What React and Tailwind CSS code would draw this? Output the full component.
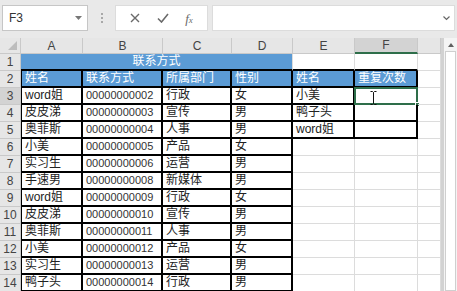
import React from "react";

const FONT = "font-['Liberation_Sans','Noto_Sans_CJK_SC',sans-serif]";

const W = {
  A: "w-[62px]",
  B: "w-[80px]",
  C: "w-[69px]",
  D: "w-[61px]",
  E: "w-[62px]",
  F: "w-[63px]",
  G: "w-[23px]",
};

const rows = [
  ["word姐", "00000000002", "行政", "女", "小美"],
  ["皮皮涕", "00000000003", "宣传", "男", "鸭子头"],
  ["奥菲斯", "00000000004", "人事", "男", "word姐"],
  ["小美", "00000000005", "产品", "女"],
  ["实习生", "00000000006", "运营", "男"],
  ["手速男", "00000000008", "新媒体", "男"],
  ["word姐", "00000000009", "行政", "女"],
  ["皮皮涕", "00000000010", "宣传", "男"],
  ["奥菲斯", "00000000011", "人事", "男"],
  ["小美", "00000000012", "产品", "女"],
  ["实习生", "00000000013", "运营", "男"],
  ["鸭子头", "00000000014", "行政", "男"],
];

const grid = "border-r border-b border-[#dcdcdc]";
const black = "border-r-2 border-b-2 border-black";

const Cell = ({ w, line = grid, extra = "", children }) => (
  <div className={`${w} h-full shrink-0 ${line} ${extra} relative flex items-end px-[3px] pb-[1px] leading-[14px] whitespace-nowrap overflow-hidden`}>
    {children}
  </div>
);

const RowHead = ({ n, active }) => (
  <div className={`w-[21px] h-full shrink-0 flex items-center justify-center border-r border-b border-[#c9c9c9] text-[12px] text-[#444] ${active ? "bg-[#d3d3d3]" : "bg-[#e6e6e6]"}`}>
    {n}
  </div>
);

const ColHead = ({ w, label, active }) => (
  <div className={`${w} h-full shrink-0 flex items-center justify-center border-r text-[12px] text-[#444] ${active ? "bg-[#d3d3d3] border-b-2 border-b-[#2e6e4a] border-r-[#c9c9c9]" : "border-b border-[#c9c9c9]"}`}>
    {label}
  </div>
);

const IBeam = () => (
  <svg width="7" height="14" viewBox="0 0 7 14" className="absolute left-[15px] top-[3px]">
    <path d="M0.5 0.5h2l1 1 1-1h2M3.5 1.5v11M0.5 13.5h2l1-1 1 1h2" fill="none" stroke="#111" strokeWidth="1" />
  </svg>
);

export default function App() {
  return (
    <div className={`w-[457px] h-[291px] overflow-hidden bg-[#e9e9e9] ${FONT} text-[12px] text-[#222]`}>
      {/* formula bar */}
      <div className="h-[38px] flex items-start pt-[5px] pl-[2px]">
        <div className="w-[86px] h-[26px] bg-white border border-[#c6c6c6] flex items-center justify-between pl-[6px] pr-[5px] text-[12px] text-[#333]">
          <span>F3</span>
          <svg width="7" height="4" viewBox="0 0 7 4"><path d="M0 0h7L3.5 4z" fill="#777" /></svg>
        </div>
        <div className="w-[27px] h-[26px] flex flex-col items-center justify-center gap-[2px]">
          <span className="w-[2px] h-[2px] bg-[#a8a8a8]" />
          <span className="w-[2px] h-[2px] bg-[#a8a8a8]" />
          <span className="w-[2px] h-[2px] bg-[#a8a8a8]" />
        </div>
        <div className="w-[93px] h-[26px] bg-white border border-[#dcdcdc] flex items-center justify-around px-[6px] text-[#6a6a6a]">
          <svg width="10" height="10" viewBox="0 0 10 10"><path d="M1 1l8 8M9 1l-8 8" stroke="#6a6a6a" strokeWidth="1.4" /></svg>
          <svg width="12" height="10" viewBox="0 0 12 10"><path d="M1 5.5l3.5 3.5L11 1" fill="none" stroke="#6a6a6a" strokeWidth="1.6" /></svg>
          <span className="font-['Liberation_Serif',serif] italic text-[13px] leading-none">f<span className="text-[9px]">x</span></span>
        </div>
        <div className="ml-[4px] w-[243px] h-[26px] bg-white border border-[#dcdcdc] flex items-center justify-end pr-[4px]">
          <svg width="7" height="5" viewBox="0 0 7 5"><path d="M0.5 0.5l3 3 3-3" fill="none" stroke="#666" strokeWidth="1.2" /></svg>
        </div>
      </div>

      <div className="flex">
        {/* sheet */}
        <div className="w-[441px] bg-white">
          <div className="h-[16px] flex bg-[#e6e6e6]">
            <div className="w-[21px] h-full shrink-0 border-r border-b border-[#c9c9c9] flex items-end justify-end pr-[3px] pb-[3px]">
              <svg width="9" height="9" viewBox="0 0 9 9"><path d="M9 0v9H0z" fill="#bdbdbd" /></svg>
            </div>
            <ColHead w={W.A} label="A" />
            <ColHead w={W.B} label="B" />
            <ColHead w={W.C} label="C" />
            <ColHead w={W.D} label="D" />
            <ColHead w={W.E} label="E" />
            <ColHead w={W.F} label="F" active />
            <ColHead w={W.G} label="" />
          </div>

          <div className="h-[17px] flex">
            <RowHead n={1} />
            <Cell w="w-[272px]" line="border-b-2 border-b-black border-r border-r-[#dcdcdc]" extra="bg-[#5b9bd5] text-white justify-center">
              联系方式
            </Cell>
            <Cell w={W.E} line="border-r border-r-[#dcdcdc] border-b-2 border-b-black" />
            <Cell w={W.F} line="border-r border-r-[#dcdcdc] border-b-2 border-b-black" />
            <Cell w={W.G} />
          </div>

          <div className="h-[17px] flex">
            <RowHead n={2} />
            <Cell w={W.A} line={black} extra="border-l bg-[#5b9bd5] text-white">姓名</Cell>
            <Cell w={W.B} line={black} extra="bg-[#5b9bd5] text-white">联系方式</Cell>
            <Cell w={W.C} line={black} extra="bg-[#5b9bd5] text-white">所属部门</Cell>
            <Cell w={W.D} line={black} extra="bg-[#5b9bd5] text-white">性别</Cell>
            <Cell w={W.E} line={black} extra="bg-[#5b9bd5] text-white">姓名</Cell>
            <Cell w={W.F} line={black} extra="bg-[#5b9bd5] text-white">重复次数</Cell>
            <Cell w={W.G} />
          </div>

          {rows.map((r, i) => {
            const n = i + 3;
            const inRight = n <= 5;
            return (
              <div key={n} className="h-[17px] flex">
                <RowHead n={n} active={n === 3} />
                <Cell w={W.A} line={black} extra="border-l">{r[0]}</Cell>
                <Cell w={W.B} line={black} extra="text-[11px] text-[#333]">{r[1]}</Cell>
                <Cell w={W.C} line={black}>{r[2]}</Cell>
                <Cell w={W.D} line={black}>{r[3]}</Cell>
                <Cell w={W.E} line={inRight ? black : grid}>{r[4]}</Cell>
                <Cell w={W.F} line={inRight ? black : grid} extra={n === 3 ? "overflow-visible" : ""}>
                  {n === 3 && (
                    <>
                      <div className="absolute -left-px -top-px -right-[2px] -bottom-[2px] border-2 border-[#2e6e4a]" />
                      <div className="absolute -right-[4px] -bottom-[4px] w-[5px] h-[5px] bg-[#2e6e4a] border border-white" />
                      <IBeam />
                    </>
                  )}
                </Cell>
                <Cell w={W.G} />
              </div>
            );
          })}
        </div>

        {/* vertical scrollbar */}
        <div className="w-[16px] h-[253px] flex border-l-[3px] border-[#d2d2d2] bg-[#f4f4f4]">
          <div className="flex-1 flex flex-col">
            <div className="h-[13px] flex items-center justify-center">
              <svg width="6" height="4" viewBox="0 0 6 4"><path d="M0 4L3 0l3 4z" fill="#606060" /></svg>
            </div>
            <div className="flex-1 mx-[1px] bg-white border border-[#cfcfcf]" />
          </div>
        </div>
      </div>
    </div>
  );
}
